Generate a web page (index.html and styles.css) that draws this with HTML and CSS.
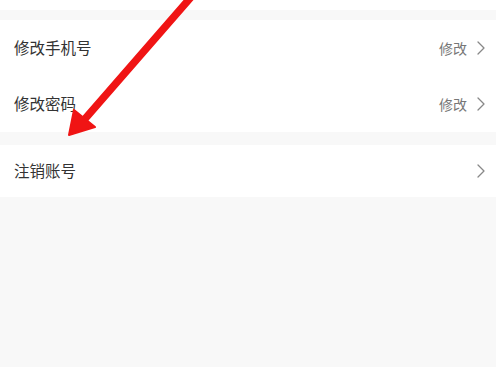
FILE: index.html
```html
<!DOCTYPE html>
<html lang="zh">
<head>
<meta charset="utf-8">
<link rel="stylesheet" href="styles.css">
</head>
<body>
<div class="page">
  <div class="top-strip"></div>
  <div class="section first">
    <div class="row tall">
      <span class="label">修改手机号</span>
      <span class="action">修改<svg class="chev" viewBox="0 0 8 14" width="8" height="14"><path d="M1 1 L7 7 L1 13" fill="none" stroke="#888" stroke-width="1.3" stroke-linecap="round" stroke-linejoin="round"/></svg></span>
    </div>
    <div class="row tall">
      <span class="label">修改密码</span>
      <span class="action">修改<svg class="chev" viewBox="0 0 8 14" width="8" height="14"><path d="M1 1 L7 7 L1 13" fill="none" stroke="#888" stroke-width="1.3" stroke-linecap="round" stroke-linejoin="round"/></svg></span>
    </div>
  </div>
  <div class="section second">
    <div class="row short">
      <span class="label">注销账号</span>
      <span class="action"><svg class="chev" viewBox="0 0 8 14" width="8" height="14"><path d="M1 1 L7 7 L1 13" fill="none" stroke="#888" stroke-width="1.3" stroke-linecap="round" stroke-linejoin="round"/></svg></span>
    </div>
  </div>
  <svg class="arrow" width="496" height="150" viewBox="0 0 496 150">
    <line x1="192" y1="-4" x2="84" y2="120" stroke="#f01414" stroke-width="7.5" stroke-linecap="round"/>
    <polygon points="69,135 74,110 95,127" fill="#f01414" stroke="#f01414" stroke-width="2" stroke-linejoin="round"/>
  </svg>
</div>
</body>
</html>
```
FILE: styles.css
```css
html, body {
  margin: 0;
  padding: 0;
}
body {
  background: #f8f8f8;
  font-family: "Noto Sans CJK SC", "Noto Sans", sans-serif;
  width: 496px;
  height: 367px;
  overflow: hidden;
}
.page {
  position: relative;
  width: 496px;
  height: 367px;
}
.top-strip {
  height: 10px;
  background: #fff;
}
.section {
  background: #fff;
}
.section.first {
  margin-top: 10px;
}
.section.second {
  margin-top: 13px;
}
.row {
  display: flex;
  align-items: center;
  justify-content: space-between;
  padding: 0 11px 0 14px;
}
.row.tall {
  height: 56px;
}
.row.short {
  height: 52px;
}
.label {
  font-size: 15.5px;
  color: #333;
  line-height: 1;
}
.action {
  display: flex;
  align-items: center;
  font-size: 14px;
  color: #777;
  line-height: 1;
}
.chev {
  margin-left: 10px;
  display: block;
}
.arrow {
  position: absolute;
  left: 0;
  top: 0;
  pointer-events: none;
}
```
